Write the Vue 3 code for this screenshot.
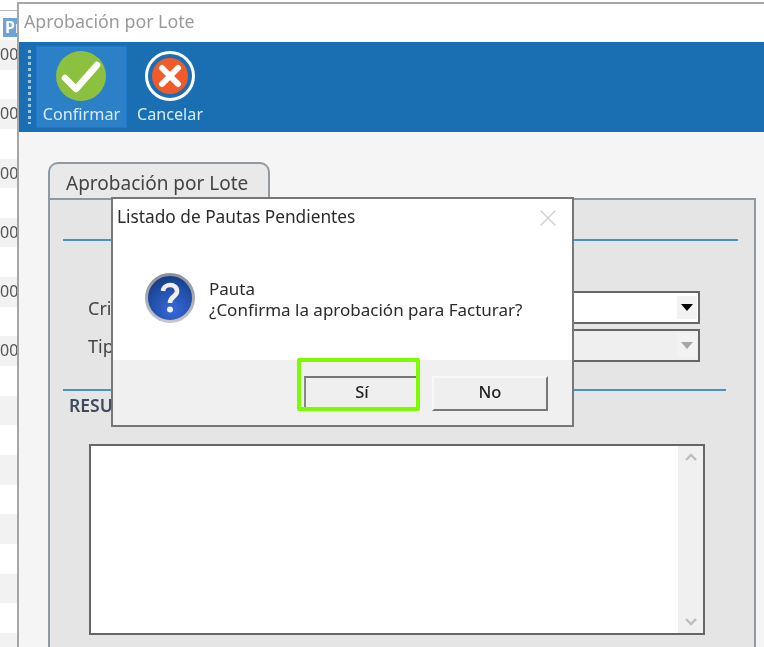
<template>
  <div class="screen">
    <!-- list behind the window -->
    <div class="back-list">
      <div class="back-head"><span class="back-head-cell">Pr</span></div>
      <div
        v-for="(row, i) in rows"
        :key="i"
        class="back-row"
        :class="{ striped: i % 2 === 0 }"
      >{{ row }}</div>
    </div>

    <div class="window">
      <div class="win-title">Aprobación por Lote</div>

      <div class="toolbar">
        <div class="grip"></div>
        <button class="tool active">
          <svg width="50" height="50" viewBox="0 0 50 50">
            <circle cx="25" cy="25" r="25" fill="#8cc13f" />
            <path d="M9 27 L20 38 L41 14" fill="none" stroke="#fff" stroke-width="6.5" stroke-linecap="round" stroke-linejoin="round" />
          </svg>
          <span>Confirmar</span>
        </button>
        <button class="tool second">
          <svg width="50" height="50" viewBox="0 0 50 50">
            <circle cx="25" cy="25" r="23.5" fill="#1a6fb3" stroke="#fff" stroke-width="3" />
            <circle cx="25" cy="25" r="18" fill="#f15a2b" />
            <path d="M17 17 L33 33 M33 17 L17 33" fill="none" stroke="#fff" stroke-width="6" stroke-linecap="round" />
          </svg>
          <span>Cancelar</span>
        </button>
      </div>

      <div class="content">
        <div class="tab">Aprobación por Lote</div>
        <div class="panel">
          <div class="rule rule-top"></div>
          <div class="form">
            <div class="field">
              <label>Criterio</label>
              <div class="select">
                <span class="select-btn"><i class="caret"></i></span>
              </div>
            </div>
            <div class="field">
              <label>Tipo</label>
              <div class="select disabled">
                <span class="select-btn"><i class="caret"></i></span>
              </div>
            </div>
          </div>
          <div class="rule rule-bottom"></div>
          <div class="section-title">RESULTADO</div>
          <div class="result">
            <div class="scrollbar">
              <svg width="14" height="9" viewBox="0 0 14 9"><path d="M2 7 L7 2 L12 7" fill="none" stroke="#bdbdbd" stroke-width="2.4" /></svg>
              <svg width="14" height="9" viewBox="0 0 14 9"><path d="M2 2 L7 7 L12 2" fill="none" stroke="#bdbdbd" stroke-width="2.4" /></svg>
            </div>
          </div>
        </div>
      </div>
    </div>

    <div class="dialog">
      <div class="dlg-head">
        <span>Listado de Pautas Pendientes</span>
        <svg class="dlg-close" width="18" height="18" viewBox="0 0 18 18">
          <path d="M1.5 1.5 L16.5 16.5 M16.5 1.5 L1.5 16.5" stroke="#cfcfcf" stroke-width="1.4" fill="none" />
        </svg>
      </div>
      <div class="dlg-body">
        <svg width="50" height="50" viewBox="0 0 50 50">
          <defs>
            <radialGradient id="qBlue" cx="0.55" cy="0.75" r="0.8">
              <stop offset="0" stop-color="#3a68d8" />
              <stop offset="0.6" stop-color="#1f4fa8" />
              <stop offset="1" stop-color="#14357f" />
            </radialGradient>
            <linearGradient id="qRing" x1="0" y1="0" x2="0" y2="1">
              <stop offset="0" stop-color="#8d9096" />
              <stop offset="1" stop-color="#c4c6ca" />
            </linearGradient>
          </defs>
          <circle cx="25" cy="25" r="23.5" fill="url(#qBlue)" stroke="url(#qRing)" stroke-width="3" />
          <path d="M18 18 C18.5 10 32.5 10 32 18.5 C31.5 24 25 23.5 25 30" fill="none" stroke="#f0f0f0" stroke-width="4.6" />
          <circle cx="25" cy="36.5" r="3" fill="#f0f0f0" />
        </svg>
        <div class="dlg-text">
          <div>Pauta</div>
          <div>¿Confirma la aprobación para Facturar?</div>
        </div>
      </div>
      <div class="dlg-foot">
        <button class="btn btn-yes">Sí</button>
        <button class="btn btn-no">No</button>
      </div>
      <div class="highlight"></div>
    </div>
  </div>
</template>

<script setup>
const rows = ['00', '', '00', '', '00', '', '00', '', '00', '', '00', '', '', '', '', '', '', '', '', '', '']
</script>

<style>
html, body {
  margin: 0;
  background: #fff;
}
</style>

<style scoped>
.screen {
  position: relative;
  width: 764px;
  height: 647px;
  overflow: hidden;
  background: #fff;
  font-family: "Noto Sans", "Open Sans", sans-serif;
  filter: blur(0.4px);
}

.back-list {
  width: 18px;
  color: #555;
  font-size: 16px;
}

.back-head {
  height: 40px;
  box-sizing: border-box;
  padding: 7px 0 0 3px;
  border-top: 1px solid #b8b8b8;
  margin-top: 10px;
  margin-bottom: -10px;
}

.back-head-cell {
  display: block;
  height: 19px;
  padding-left: 2px;
  background: #6fa3d8;
  color: #fff;
  font-size: 16px;
  font-weight: 700;
  line-height: 19px;
  overflow: hidden;
}

.back-row {
  height: 29.65px;
  line-height: 29px;
  overflow: hidden;
  white-space: nowrap;
}

.back-row.striped {
  background: #f2f2f2;
}

.window {
  position: absolute;
  left: 17px;
  top: 2px;
  width: 760px;
  height: 660px;
  box-sizing: border-box;
  border: 2px solid #a4a6a8;
  border-right: 0;
  background: #f5f5f5;
}

.win-title {
  height: 38px;
  padding-left: 5px;
  background: #fff;
  color: #9a9a9a;
  font-size: 17.8px;
  line-height: 35px;
}

.toolbar {
  height: 90px;
  display: flex;
  align-items: center;
  background: #1a6fb3;
  padding-left: 9px;
  box-sizing: border-box;
}

.grip {
  width: 3px;
  height: 74px;
  margin-right: 5px;
  background: repeating-linear-gradient(#9cc8e8 0 3px, transparent 3px 6px);
}

.tool {
  width: 91px;
  height: 82px;
  padding: 4px 0 0;
  border: 1px solid transparent;
  background: none;
  color: #d9ecf8;
  font: inherit;
  font-size: 16.2px;
  display: flex;
  flex-direction: column;
  align-items: center;
  gap: 2px;
  box-sizing: border-box;
}

.tool.second {
  width: 86px;
}

.tool.active {
  background: #2b80c8;
  border-color: #1f79cc;
}

.tool.active svg {
  margin-right: 2px;
}

.tool svg {
  flex: none;
}

.content {
  padding: 30px 0 0 29px;
}

.tab {
  width: 222px;
  height: 36px;
  box-sizing: border-box;
  padding-left: 16px;
  border: 2px solid #8c9aa6;
  border-bottom: 0;
  border-radius: 10px 10px 0 0;
  background: #e9e9e9;
  color: #444;
  font-size: 19px;
  line-height: 39px;
  white-space: nowrap;
}

.panel {
  width: 708px;
  height: 470px;
  box-sizing: border-box;
  padding: 39px 0 0 13px;
  border: 2px solid #8c9aa6;
  background: #e5e5e5;
}

.rule {
  height: 2px;
  background: #4a90c8;
}

.rule-top {
  width: 675px;
}

.rule-bottom {
  width: 663px;
}

.form {
  padding: 50px 0 27px 25px;
  display: flex;
  flex-direction: column;
  gap: 5px;
  width: 612px;
}

.field {
  display: flex;
  align-items: center;
  height: 33px;
  color: #444;
  font-size: 18px;
}

.field label {
  width: 90px;
  white-space: nowrap;
}

.select {
  flex: 1;
  height: 33px;
  box-sizing: border-box;
  border: 2px solid #666;
  background: #fff;
  display: flex;
  justify-content: flex-end;
  padding: 3px 1px;
}

.select.disabled {
  background: #efefef;
}

.select-btn {
  width: 20px;
  background: #f2f2f2;
  display: flex;
  align-items: center;
  justify-content: center;
}

.caret {
  width: 0;
  height: 0;
  border-left: 6px solid transparent;
  border-right: 6px solid transparent;
  border-top: 7px solid #000;
}

.disabled .caret {
  border-top-color: #a6a6a6;
}

.section-title {
  margin: 2px 0 0 6px;
  color: #3f4a5c;
  font-size: 17.5px;
  font-weight: 600;
  line-height: 24px;
}

.result {
  width: 616px;
  height: 191px;
  margin: 27px 0 0 26px;
  box-sizing: border-box;
  border: 2px solid #666;
  background: #fff;
  display: flex;
  justify-content: flex-end;
}

.scrollbar {
  width: 25px;
  background: #f0f0f0;
  display: flex;
  flex-direction: column;
  align-items: center;
  justify-content: space-between;
  padding: 7px 0;
}

.dialog {
  position: absolute;
  left: 111px;
  top: 197px;
  width: 463px;
  height: 230px;
  box-sizing: border-box;
  border: 2px solid #777;
  background: #fff;
  display: flex;
  flex-direction: column;
  color: #2a2a2a;
  font-size: 17px;
}

.dlg-head {
  height: 36px;
  flex: none;
  position: relative;
  padding-left: 4px;
  font-size: 17.3px;
  line-height: 36px;
}

.dlg-close {
  position: absolute;
  right: 15px;
  top: 10px;
}

.dlg-body {
  flex: 1;
  display: flex;
  align-items: center;
  gap: 15px;
  padding: 0 0 0 32px;
}

.dlg-text {
  line-height: 21px;
  margin-top: 2px;
  margin-left: -1px;
}

.dlg-foot {
  height: 65px;
  flex: none;
  box-sizing: border-box;
  background: #f0f0f0;
  display: flex;
  align-items: flex-start;
  gap: 14px;
  padding: 16px 0 0 191px;
}

.btn {
  height: 35px;
  box-sizing: border-box;
  border: 2px solid;
  border-color: #f8f8f8 #777 #777 #f8f8f8;
  background: #efefef;
  color: #222;
  font: inherit;
  font-size: 16.5px;
  font-weight: 500;
  padding: 0 0 4px;
}

.btn-yes {
  width: 116px;
  border-color: #777 #efefef #efefef #888;
}

.btn-no {
  width: 116px;
  margin-left: -2px;
}

.highlight {
  position: absolute;
  left: 184px;
  top: 159px;
  width: 123px;
  height: 53px;
  box-sizing: border-box;
  border: 4px solid #7dfc00;
  border-radius: 2px;
}
</style>
